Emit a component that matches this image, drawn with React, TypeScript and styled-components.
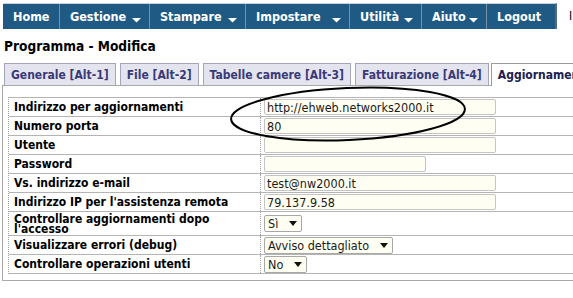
import styled, { createGlobalStyle } from 'styled-components';

const GlobalStyle = createGlobalStyle`
	html, body {
		margin: 0;
		padding: 0;
		background: #ffffff;
		overflow: hidden;
	}
	body {
		font-family: 'DejaVu Sans Condensed', 'DejaVu Sans', Verdana, sans-serif;
	}
`;

const menu = [
	{ label: 'Home', arrow: false, width: 57 },
	{ label: 'Gestione', arrow: true, width: 90 },
	{ label: 'Stampare', arrow: true, width: 96 },
	{ label: 'Impostare', arrow: true, width: 104 },
	{ label: 'Utilità', arrow: true, width: 72 },
	{ label: 'Aiuto', arrow: true, width: 65 },
	{ label: 'Logout', arrow: false, width: 68 },
];

const tabs = [
	{ label: 'Generale [Alt-1]', active: false },
	{ label: 'File [Alt-2]', active: false },
	{ label: 'Tabelle camere [Alt-3]', active: false },
	{ label: 'Fatturazione [Alt-4]', active: false },
	{ label: 'Aggiornamenti [Alt-5]', active: true },
];

type Field =
	| { kind: 'input'; label: string; value: string; short?: boolean; tall?: boolean }
	| { kind: 'select'; label: string; value: string; tall?: boolean };

const fields: Field[] = [
	{ kind: 'input', label: 'Indirizzo per aggiornamenti', value: 'http://ehweb.networks2000.it' },
	{ kind: 'input', label: 'Numero porta', value: '80' },
	{ kind: 'input', label: 'Utente', value: '' },
	{ kind: 'input', label: 'Password', value: '', short: true },
	{ kind: 'input', label: 'Vs. indirizzo e-mail', value: 'test@nw2000.it' },
	{ kind: 'input', label: "Indirizzo IP per l'assistenza remota", value: '79.137.9.58' },
	{ kind: 'select', label: "Controllare aggiornamenti dopo l'accesso", value: 'Sì', tall: true },
	{ kind: 'select', label: 'Visualizzare errori (debug)', value: 'Avviso dettagliato' },
	{ kind: 'select', label: 'Controllare operazioni utenti', value: 'No' },
];

function MenuArrow() {
	return (
		<svg width='9' height='5' viewBox='0 0 9 5'>
			<polygon points='0,0 9,0 4.5,4.5' fill='#ffffff' />
		</svg>
	);
}

export default function App() {
	return (
		<Page>
			<GlobalStyle />
			<TopRow>
				<MenuBar>
					{menu.map((item) => (
						<MenuItem key={item.label} $w={item.width}>
							{item.label}
							{item.arrow && (
								<ArrowBox>
									<MenuArrow />
								</ArrowBox>
							)}
						</MenuItem>
					))}
				</MenuBar>
				<LangMark>I</LangMark>
			</TopRow>

			<Title>Programma - Modifica</Title>

			<TabRow>
				{tabs.map((tab) => (
					<Tab key={tab.label} $active={tab.active}>
						{tab.label}
					</Tab>
				))}
			</TabRow>

			<Panel>
				<Table>
					{fields.map((f) => (
						<Row key={f.label} $tall={f.tall}>
							<Label $tall={f.tall}>{f.label}</Label>
							<Cell>
								{f.kind === 'input' ? (
									<TextInput readOnly defaultValue={f.value} $short={f.short} />
								) : (
									<SelectBox>
										{f.value}
										<SelectArrow />
									</SelectBox>
								)}
							</Cell>
						</Row>
					))}
				</Table>
			</Panel>

			<Oval width='252' height='66' viewBox='0 0 252 66'>
				<ellipse cx='123' cy='31' rx='117' ry='26' fill='none' stroke='#000000' strokeWidth='2' transform='rotate(-2.5 123 31)' />
			</Oval>
		</Page>
	);
}

const Page = styled.div`
	position: relative;
	width: 573px;
	height: 298px;
	overflow: hidden;
	padding: 3px 0 0 2px;
	box-sizing: border-box;
`;

const TopRow = styled.div`
	display: flex;
	align-items: center;
	gap: 12px;
	white-space: nowrap;
`;

const MenuBar = styled.div`
	display: flex;
	height: 26px;
	background-color: #1f5a84;
	border-top: 1px solid #c9d2da;
	border-right: 2px solid #4f6b80;
	box-sizing: border-box;
	margin-left: 1px;
`;

const MenuItem = styled.div<{ $w: number }>`
	display: flex;
	align-items: center;
	width: ${({ $w }) => $w}px;
	padding: 0 8px 0 10px;
	box-sizing: border-box;
	color: #ffffff;
	font-size: 12.5px;
	font-weight: 700;
	border-right: 1px solid #7892a6;

	&:last-child {
		border-right: none;
	}
`;

const ArrowBox = styled.span`
	display: flex;
	margin-left: auto;
	padding-top: 8px;
`;

const LangMark = styled.div`
	font-size: 12px;
	color: #000000;
`;

const Title = styled.div`
	margin: 9px 0 0 2px;
	font-size: 13.6px;
	font-weight: 700;
	color: #000000;
`;

const TabRow = styled.div`
	display: flex;
	gap: 4px;
	margin: 9px 0 0 2px;
	white-space: nowrap;
`;

const Tab = styled.div<{ $active?: boolean }>`
	display: flex;
	align-items: center;
	padding: 0 6px;
	font-size: 12px;
	font-weight: 700;
	color: ${({ $active }) => ($active ? '#202050' : '#3a3a78')};
	background-color: ${({ $active }) => ($active ? '#ffffff' : '#e4e4ef')};
	border: 1px solid ${({ $active }) => ($active ? '#9a9a9a' : '#a4a4bc')};
	border-bottom: none;
	box-sizing: border-box;
	margin-bottom: ${({ $active }) => ($active ? '-1px' : '0')};
	margin-left: ${({ $active }) => ($active ? '-2px' : '0')};
	height: ${({ $active }) => ($active ? '23px' : '22px')};
	position: relative;
	z-index: ${({ $active }) => ($active ? 1 : 0)};
`;

const Panel = styled.div`
	border: 1px solid #a8a8a8;
	border-right: none;
	padding: 11px 0 6px 5px;
	width: 620px;
	box-sizing: border-box;
`;

const Table = styled.div`
	display: flex;
	flex-direction: column;
	border-top: 1px solid #b4b4b4;
	border-left: 1px dotted #a0a0a0;
`;

const Row = styled.div<{ $tall?: boolean }>`
	display: grid;
	grid-template-columns: 252px 1fr;
	height: ${({ $tall }) => ($tall ? '24px' : '19px')};
	border-bottom: 1px solid #b4b4b4;
	box-sizing: border-box;
`;

const Label = styled.div<{ $tall?: boolean }>`
	display: flex;
	align-items: center;
	padding-left: 5px;
	font-size: 12px;
	font-weight: 700;
	line-height: ${({ $tall }) => ($tall ? '10px' : '14px')};
	color: #000000;
	border-right: 1px dotted #a0a0a0;
`;

const Cell = styled.div`
	display: flex;
	align-items: center;
	padding-left: 3px;
`;

const TextInput = styled.input<{ $short?: boolean }>`
	width: ${({ $short }) => ($short ? '162px' : '232px')};
	height: 16px;
	padding: 0 2px;
	margin: 0;
	box-sizing: border-box;
	border: 1px solid #c4c4c4;
	border-radius: 2px;
	background-color: #fefef2;
	font-family: 'DejaVu Sans Condensed', 'DejaVu Sans', Verdana, sans-serif;
	font-size: 12.5px;
	color: #1a1a1a;
	outline: none;
`;

const SelectBox = styled.div`
	display: flex;
	align-items: center;
	height: 17px;
	padding: 0 4px 0 3px;
	box-sizing: border-box;
	border: 1px solid #a8a8a8;
	border-radius: 2px;
	background-color: #fefef2;
	font-size: 12.5px;
	color: #1a1a1a;
	white-space: nowrap;
`;

const SelectArrow = styled.span`
	margin-left: 11px;
	width: 0;
	height: 0;
	border-left: 4px solid transparent;
	border-right: 4px solid transparent;
	border-top: 5px solid #111111;
`;

const Oval = styled.svg`
	position: absolute;
	left: 225px;
	top: 83px;
	pointer-events: none;
`;
